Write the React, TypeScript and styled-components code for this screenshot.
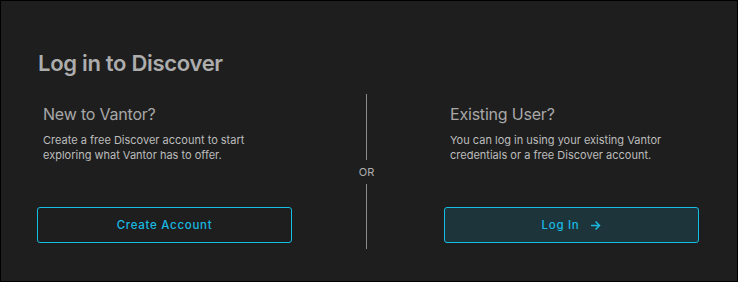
import React from "react";
import styled, { createGlobalStyle } from "styled-components";

const Global = createGlobalStyle`
  html, body { margin: 0; padding: 0; background: #1e1e1e; }
  * { box-sizing: border-box; }
`;

const Panel = styled.div`
  width: 738px;
  height: 282px;
  border: 1px solid #000;
  background: #1e1e1e;
  padding: 46px 38px 0 36px;
  font-family: Inter, "Noto Sans", sans-serif;
  display: flex;
  flex-direction: column;
`;

const Title = styled.h1`
  margin: 0 0 0 1px;
  font-size: 22px;
  line-height: 32px;
  font-weight: 600;
  color: #adadad;
  letter-spacing: -0.3px;
`;

const Body = styled.div`
  margin-top: 15px;
  display: grid;
  grid-template-columns: 255px 1fr 255px;
  height: 155px;
`;

const Column = styled.div`
  display: flex;
  flex-direction: column;
  padding-bottom: 6px;
`;

const Heading = styled.h2`
  margin: 9px 0 0 6px;
  font-size: 16px;
  line-height: 22px;
  font-weight: 400;
  color: #a8a8a8;
  letter-spacing: -0.2px;
`;

const Desc = styled.p`
  margin: 8px 0 0 6px;
  font-size: 11px;
  line-height: 15px;
  color: #bcbcbc;
`;

const Button = styled.button<{ $filled?: boolean }>`
  margin-top: auto;
  height: 36px;
  width: 100%;
  border: 1.5px solid #16bde6;
  border-radius: 3px;
  background: ${(p) => (p.$filled ? "#1d343a" : "transparent")};
  color: #19b9e2;
  font-family: Inter, "Noto Sans", sans-serif;
  font-size: 11.5px;
  font-weight: 500;
  letter-spacing: 0.7px;
  display: flex;
  align-items: center;
  justify-content: center;
  gap: 11px;
  cursor: pointer;
`;

const Divider = styled.div`
  display: flex;
  flex-direction: column;
  align-items: center;
  gap: 6px;
  padding-right: 3px;
`;

const Line = styled.div`
  flex: 1;
  width: 1px;
  background: #8a8a8a;
`;

const Or = styled.span`
  font-size: 11px;
  line-height: 12px;
  color: #b0b0b0;
`;

const Arrow = () => (
  <svg width="11" height="11" viewBox="0 0 11 11" fill="none" stroke="currentColor" strokeWidth="1.5">
    <path d="M1 5.5h8.5M5.5 1.5l4 4-4 4" />
  </svg>
);

export default function App() {
  return (
    <>
      <Global />
      <Panel>
        <Title>Log in to Discover</Title>
        <Body>
          <Column>
            <Heading>New to Vantor?</Heading>
            <Desc>
              Create a free Discover account to start
              <br />
              exploring what Vantor has to offer.
            </Desc>
            <Button>Create Account</Button>
          </Column>
          <Divider>
            <Line />
            <Or>OR</Or>
            <Line />
          </Divider>
          <Column>
            <Heading>Existing User?</Heading>
            <Desc>
              You can log in using your existing Vantor
              <br />
              credentials or a free Discover account.
            </Desc>
            <Button $filled>
              Log In <Arrow />
            </Button>
          </Column>
        </Body>
      </Panel>
    </>
  );
}
